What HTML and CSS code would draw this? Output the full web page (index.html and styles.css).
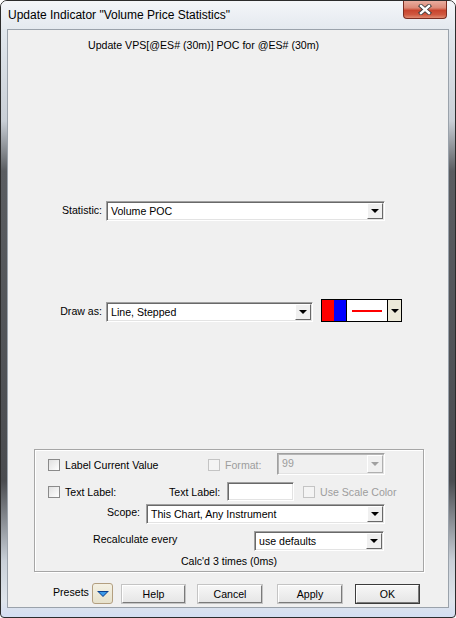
FILE: index.html
```html
<!DOCTYPE html>
<html lang="en">
<head>
  <meta charset="UTF-8">
  <title>Update Indicator</title>
  <link rel="stylesheet" href="styles.css">
</head>
<body>

  <div class="window">
    <div class="titlebar">
      <span class="title">Update Indicator "Volume Price Statistics"</span>
      <div class="close">
        <svg width="14" height="11" viewBox="0 0 14 11">
          <path d="M3 2 L11 9 M11 2 L3 9" stroke="#3a3a3a" stroke-width="4.2" stroke-linecap="square"/>
          <path d="M3 2 L11 9 M11 2 L3 9" stroke="#fff" stroke-width="2.4" stroke-linecap="square"/>
        </svg>
      </div>
    </div>

    <div class="client">
      <div class="header">Update VPS[@ES# (30m)] POC for @ES# (30m)</div>

      <div class="field-row stat-row">
        <span class="field-label">Statistic:</span>
        <div class="combo combo-stat">
          <span class="combo-text">Volume POC</span>
          <span class="combo-btn"><i class="arrow"></i></span>
        </div>
      </div>

      <div class="field-row draw-row">
        <span class="field-label">Draw as:</span>
        <div class="combo combo-draw">
          <span class="combo-text">Line, Stepped</span>
          <span class="combo-btn"><i class="arrow"></i></span>
        </div>
        <div class="color-pick">
          <span class="swatch red"></span>
          <span class="swatch blue"></span>
          <span class="line-preview"><i></i></span>
          <span class="color-btn"><i class="arrow"></i></span>
        </div>
      </div>

      <div class="group">
        <div class="grow row1">
          <div class="cell cell-a"><span class="check"></span><span>Label Current Value</span></div>
          <div class="cell cell-b disabled"><span class="check"></span><span>Format:</span></div>
          <div class="combo combo-format disabled">
            <span class="combo-text">99</span>
            <span class="combo-btn"><i class="arrow"></i></span>
          </div>
        </div>
        <div class="grow row2">
          <div class="cell cell-c"><span class="check"></span><span>Text Label:</span></div>
          <span class="cell cell-d">Text Label:</span>
          <span class="textbox"></span>
          <div class="cell cell-e disabled"><span class="check"></span><span>Use Scale Color</span></div>
        </div>
        <div class="grow row3">
          <span class="scope-label">Scope:</span>
          <div class="combo combo-scope">
            <span class="combo-text">This Chart, Any Instrument</span>
            <span class="combo-btn"><i class="arrow"></i></span>
          </div>
        </div>
        <div class="grow row4">
          <span class="recalc-label">Recalculate every</span>
          <div class="combo combo-recalc">
            <span class="combo-text">use defaults</span>
            <span class="combo-btn"><i class="arrow"></i></span>
          </div>
        </div>
        <div class="calc-info">Calc'd 3 times (0ms)</div>
      </div>

      <div class="buttons">
        <span class="presets-label">Presets</span>
        <span class="presets-btn"><i></i></span>
        <button class="btn btn-help">Help</button>
        <button class="btn btn-cancel">Cancel</button>
        <button class="btn btn-apply">Apply</button>
        <button class="btn btn-ok">OK</button>
      </div>
    </div>
  </div>

</body>
</html>
```

FILE: styles.css
```css
body {
  margin: 0;
  padding: 0;
  width: 456px;
  height: 618px;
  overflow: hidden;
  font-family: 'Liberation Sans', Arial, sans-serif;
  font-size: 10.6px;
  color: #000;
  background: #fff;
}

.window {
  box-sizing: border-box;
  width: 456px;
  height: 618px;
  border: 1px solid #2c2c2c;
  border-radius: 7px 7px 4px 4px;
  padding: 0 6px 9px 6px;
  display: flex;
  flex-direction: column;
  background:
    linear-gradient(to bottom, #eef2f6 0, #e2e8ee 28px, #c9cfd6 120px, #5a5d61 170px, #4a4c50 480px, #c9d0d8 560px, #dfe5ec 600px, #d4def2 100%);
}

.titlebar {
  height: 28px;
  display: flex;
  justify-content: space-between;
  align-items: flex-start;
  background: linear-gradient(to bottom, #f4f6f9, #e4e9ef);
  margin: 0 -6px;
  padding: 0 8px 0 7px;
  border-radius: 6px 6px 0 0;
}

.title {
  font-size: 12px;
  margin-top: 7px;
  color: #000;
}

.close {
  box-sizing: border-box;
  width: 44px;
  height: 18px;
  border: 1px solid #7a2d21;
  border-top: none;
  border-radius: 0 0 4px 4px;
  background: linear-gradient(to bottom, #e9ad9f 0, #dc8a78 40%, #c8452e 55%, #d0583f 80%, #e08a70 100%);
  display: flex;
  justify-content: center;
  align-items: center;
}

.client {
  flex: 1;
  border: 1px solid #9aa2ab;
  background: #f0f0f0;
  display: flex;
  flex-direction: column;
}

.header {
  margin: 9px 0 0 80px;
  line-height: 13px;
}

.field-row {
  display: flex;
  align-items: flex-start;
  height: 20px;
}

.stat-row {
  margin-top: 149px;
}

.draw-row {
  margin-top: 81px;
}

.field-label {
  width: 94px;
  text-align: right;
  margin-right: 4px;
  line-height: 18px;
}

/* combo boxes */
.combo {
  box-sizing: border-box;
  height: 20px;
  display: flex;
  background: #fff;
  border: 1px solid;
  border-color: #a0a0a0 #fff #fff #a0a0a0;
  box-shadow: inset 1px 1px 0 #696969, inset -1px -1px 0 #e3e3e3;
  padding: 1px;
}

.combo-text {
  flex: 1;
  padding: 0 0 0 3px;
  line-height: 16px;
  white-space: nowrap;
  overflow: hidden;
}

.combo-btn {
  box-sizing: border-box;
  width: 16px;
  background: #f0f0f0;
  border: 1px solid;
  border-color: #fff #696969 #696969 #fff;
  display: flex;
  justify-content: center;
  align-items: center;
}

.arrow {
  display: block;
  width: 0;
  height: 0;
  border-left: 4px solid transparent;
  border-right: 4px solid transparent;
  border-top: 4px solid #000;
}

.combo-stat {
  width: 279px;
}

.combo-draw {
  width: 207px;
}

/* color picker */
.color-pick {
  box-sizing: border-box;
  width: 81px;
  height: 23px;
  margin: -3px 0 0 8px;
  border: 1px solid #000;
  display: flex;
}

.swatch {
  width: 12px;
}

.red {
  background: #ff0000;
}

.blue {
  background: #0000ff;
  border-right: 1px solid #000;
}

.line-preview {
  flex: 1;
  background: #fff;
  display: flex;
  align-items: center;
  padding: 0 5px;
}

.line-preview i {
  display: block;
  width: 100%;
  height: 2px;
  background: #ff0000;
}

.color-btn {
  width: 13px;
  background: #ece9d8;
  border-left: 1px solid #000;
  display: flex;
  justify-content: center;
  align-items: center;
}

/* settings group */
.group {
  box-sizing: border-box;
  width: 390px;
  height: 123px;
  margin: 127px 0 0 26px;
  border: 1px solid #a6a6a6;
  box-shadow: inset 1px 1px 0 #fff, 1px 1px 0 #fff;
}

.grow {
  display: flex;
  align-items: center;
}

.row1 {
  margin-top: 3px;
  height: 21px;
}

.row2 {
  margin-top: 8px;
  height: 19px;
}

.row3 {
  margin-top: 3px;
  height: 20px;
}

.row4 {
  margin-top: 7px;
  height: 20px;
}

.cell {
  display: flex;
  align-items: center;
  white-space: nowrap;
}

.row1 .cell {
  padding-top: 3px;
}

.cell-a {
  width: 160px;
  margin-left: 13px;
}

.cell-b {
  width: 69px;
}

.cell-c {
  width: 121px;
  margin-left: 13px;
}

.cell-d {
  width: 58px;
}

.cell-e {
  margin-left: 9px;
}

.check {
  box-sizing: border-box;
  width: 12px;
  height: 12px;
  margin-right: 5px;
  border: 1px solid #8a8a8a;
  background: linear-gradient(135deg, #e0e0e0, #fff);
}

.disabled {
  color: #9d9d9d;
}

.disabled .check {
  border-color: #c4c4c4;
  background: #f4f4f4;
}

.combo-format {
  width: 108px;
  height: 22px;
  background: #f0f0f0;
  box-shadow: inset 1px 1px 0 #b5b5b5, inset -1px -1px 0 #e3e3e3;
}

.combo-format .combo-btn {
  border-color: #fff #b0b0b0 #b0b0b0 #fff;
}

.combo-format .arrow {
  border-top-color: #a0a0a0;
}

.textbox {
  box-sizing: border-box;
  width: 67px;
  height: 19px;
  background: #fff;
  border: 1px solid;
  border-color: #a0a0a0 #fff #fff #a0a0a0;
  box-shadow: inset 1px 1px 0 #696969, inset -1px -1px 0 #e3e3e3;
}

.scope-label {
  width: 105px;
  text-align: right;
  margin-right: 6px;
  align-self: flex-start;
  line-height: 16px;
}

.combo-scope {
  width: 239px;
}

.recalc-label {
  width: 161px;
  margin-left: 58px;
  align-self: flex-start;
  line-height: 16px;
}

.combo-recalc {
  width: 130px;
}

.calc-info {
  margin-top: 4px;
  line-height: 13px;
  text-align: center;
}

/* bottom buttons */
.buttons {
  display: flex;
  align-items: center;
  margin-top: 11px;
  height: 21px;
}

.presets-label {
  width: 39px;
  margin-left: 45px;
  margin-top: -4px;
}

.presets-btn {
  box-sizing: border-box;
  width: 21px;
  height: 21px;
  border: 1px solid #b39f80;
  border-radius: 3px;
  background: linear-gradient(to bottom, #f4f1e4, #e6e1cc);
  display: flex;
  justify-content: center;
  align-items: center;
}

.presets-btn i {
  display: block;
  width: 0;
  height: 0;
  border-left: 6px solid transparent;
  border-right: 6px solid transparent;
  border-top: 6px solid #0a3f8c;
  position: relative;
}

.presets-btn i::after {
  content: "";
  position: absolute;
  left: -4px;
  top: -5px;
  border-left: 4px solid transparent;
  border-right: 4px solid transparent;
  border-top: 4px solid #3d9ae8;
}

.btn {
  box-sizing: border-box;
  height: 18px;
  padding: 0;
  font-family: 'Liberation Sans', Arial, sans-serif;
  font-size: 10.6px;
  color: #000;
  background: linear-gradient(to bottom, #f6f6f6, #e6e6e6);
  border: 1px solid;
  border-color: #fff #7a7a7a #7a7a7a #fff;
  box-shadow: 0 0 0 1px #c4c4c4;
}

.btn-help {
  width: 63px;
  margin-left: 9px;
}

.btn-cancel {
  width: 64px;
  margin-left: 13px;
}

.btn-apply {
  width: 64px;
  margin-left: 16px;
}

.btn-ok {
  width: 63px;
  margin-left: 14px;
  box-shadow: 0 0 0 1px #3c3c3c;
}
```
